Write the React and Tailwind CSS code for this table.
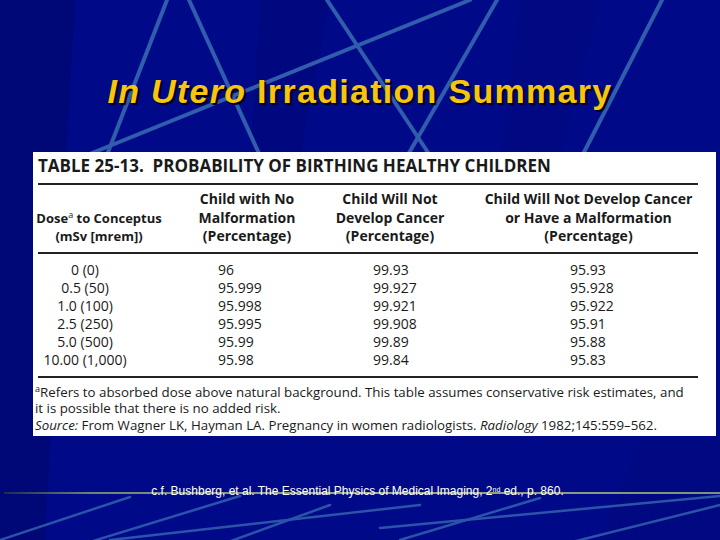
const rows = [
  ["0 (0)", "96", "99.93", "95.93"],
  ["0.5 (50)", "95.999", "99.927", "95.928"],
  ["1.0 (100)", "95.998", "99.921", "95.922"],
  ["2.5 (250)", "95.995", "99.908", "95.91"],
  ["5.0 (500)", "95.99", "99.89", "95.88"],
  ["10.00 (1,000)", "95.98", "99.84", "95.83"],
];

const Backdrop = () => (
  <svg
    className="absolute inset-0"
    width="720"
    height="540"
    viewBox="0 0 720 540"
  >
    <defs>
      <linearGradient id="rule" x1="0" x2="1" y1="0" y2="0">
        <stop offset="0" stopColor="#1d2a55" />
        <stop offset="0.12" stopColor="#6f8470" />
        <stop offset="0.5" stopColor="#9aab86" />
        <stop offset="1" stopColor="#7f9177" />
      </linearGradient>
    </defs>
    <polygon points="0,0 75,0 45,540 0,540" fill="#000670" opacity="0.7" />
    <polygon points="260,0 330,0 300,160 250,160" fill="#00077a" opacity="0.6" />
    <polygon points="520,0 600,0 560,160 500,160" fill="#00077a" opacity="0.5" />
    <polygon points="640,440 720,440 720,540 600,540" fill="#00087c" opacity="0.5" />
    <g stroke="#3a6cb4" strokeWidth="4" strokeLinecap="round" opacity="0.85">
      <line x1="167" y1="0" x2="105" y2="160" />
      <line x1="60" y1="166" x2="470" y2="0" />
      <line x1="189" y1="0" x2="262" y2="160" />
      <line x1="327" y1="0" x2="433" y2="160" />
      <line x1="497" y1="0" x2="405" y2="160" />
      <line x1="662" y1="0" x2="580" y2="160" />
    </g>
    <g stroke="#3a6cb4" strokeWidth="2.5" strokeLinecap="round" opacity="0.75">
      <line x1="0" y1="540" x2="130" y2="497" />
      <line x1="80" y1="545" x2="240" y2="496" />
      <line x1="110" y1="540" x2="420" y2="505" />
      <line x1="220" y1="545" x2="330" y2="505" />
      <line x1="400" y1="540" x2="540" y2="498" />
      <line x1="380" y1="528" x2="720" y2="496" />
      <line x1="560" y1="545" x2="720" y2="505" />
    </g>
    <rect x="4" y="492" width="716" height="2" fill="url(#rule)" />
  </svg>
);

export default function App() {
  return (
    <div className="relative w-[720px] h-[540px] overflow-hidden bg-[#000a88]">
      <Backdrop />
      <div className="relative flex flex-col">
        <h1 className="pt-[70px] h-[112px] text-center text-[34px] leading-[42px] tracking-[1.3px] font-bold text-[#f7c60c] [font-family:'Liberation_Sans',Arial,sans-serif] [text-shadow:2px_2px_1px_#000020]">
          <span className="italic">In Utero</span> Irradiation Summary
        </h1>

        <div className="ml-[33px] mt-[40px] w-[683px] h-[284px] bg-white text-[#1a1a1a] [font-family:'Open_Sans',sans-serif]">
          <div className="pt-[4px] pl-[5px] text-[17px] leading-[20px] font-bold whitespace-nowrap">
            TABLE 25-13.&nbsp; PROBABILITY OF BIRTHING HEALTHY CHILDREN
          </div>
          <div className="ml-[5px] mt-[7px] w-[660px] h-[2px] bg-[#222]" />

          <div className="flex items-end mt-[5px] text-[14px] leading-[18.5px] font-bold">
            <div className="w-[130px] text-center whitespace-nowrap text-[13px] pl-[2px]">
              <div>
                Dose<sup className="text-[9px] font-normal">a</sup> to Conceptus
              </div>
              <div>(mSv [mrem])</div>
            </div>
            <div className="w-[168px] text-center">
              <div>Child with No</div>
              <div>Malformation</div>
              <div>(Percentage)</div>
            </div>
            <div className="w-[118px] text-center whitespace-nowrap">
              <div>Child Will Not</div>
              <div>Develop Cancer</div>
              <div>(Percentage)</div>
            </div>
            <div className="w-[267px] pl-[12px] text-center whitespace-nowrap">
              <div>Child Will Not Develop Cancer</div>
              <div>or Have a Malformation</div>
              <div>(Percentage)</div>
            </div>
          </div>
          <div className="ml-[5px] mt-[6px] w-[660px] h-[2px] bg-[#222]" />

          <div className="mt-[7px] text-[14px] leading-[18px]">
            {rows.map((r) => (
              <div key={r[0]} className="flex">
                <div className="w-[130px] pr-[26px] text-center">{r[0]}</div>
                <div className="w-[168px] pl-[55px]">{r[1]}</div>
                <div className="w-[118px] pl-[42px]">{r[2]}</div>
                <div className="w-[267px] pl-[121px]">{r[3]}</div>
              </div>
            ))}
          </div>
          <div className="ml-[5px] mt-[7px] w-[660px] h-[2px] bg-[#222]" />

          <div className="mt-[6px] pl-[2px] text-[13.3px] leading-[16.5px]">
            <div className="whitespace-nowrap">
              <sup className="text-[9px]">a</sup>Refers to absorbed dose above natural
              background. This table assumes conservative risk estimates, and
            </div>
            <div>it is possible that there is no added risk.</div>
            <div>
              <span className="italic">Source:</span> From Wagner LK, Hayman LA.
              Pregnancy in women radiologists. <span className="italic">Radiology</span>{" "}
              1982;145:559–562.
            </div>
          </div>
        </div>

        <p className="mt-[48px] pr-[5px] text-center text-[12px] leading-[14px] text-white [font-family:'Liberation_Sans_Narrow','Liberation_Sans',Arial,sans-serif]">
          c.f. Bushberg, et al. The Essential Physics of Medical Imaging, 2
          <sup className="text-[7px]">nd</sup> ed., p. 860.
        </p>
      </div>
    </div>
  );
}
